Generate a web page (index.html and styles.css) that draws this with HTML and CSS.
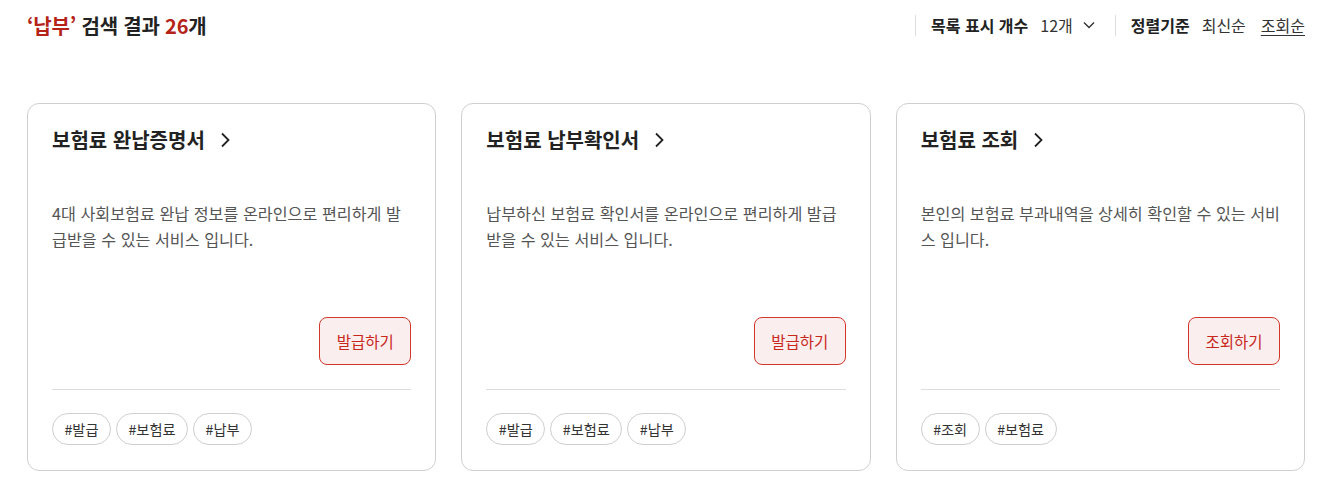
FILE: index.html
```html
<!DOCTYPE html>
<html lang="ko">
<head>
<meta charset="utf-8">
<link rel="stylesheet" href="styles.css">
</head>
<body>
<div class="page">
  <div class="top">
    <h2 class="result"><span class="hl">‘납부’</span> 검색 결과 <span class="hl">26</span>개</h2>
    <div class="opts">
      <div class="opt">
        <span class="lbl">목록 표시 개수</span>
        <span class="sel">12개
          <svg width="12" height="8" viewBox="0 0 12 8"><path d="M1 1.5l5 5 5-5" fill="none" stroke="#333" stroke-width="1.4"/></svg>
        </span>
      </div>
      <div class="opt">
        <span class="lbl">정렬기준</span>
        <span class="sort">최신순</span>
        <span class="sort active">조회순</span>
      </div>
    </div>
  </div>
  <div class="cards">
    <div class="card">
      <a class="title">보험료 완납증명서 <svg width="10" height="16" viewBox="0 0 10 16"><path d="M2 1.5l6.5 6.5L2 14.5" fill="none" stroke="#222" stroke-width="1.8"/></svg></a>
      <p class="desc">4대 사회보험료 완납 정보를 온라인으로 편리하게 발급받을 수 있는 서비스 입니다.</p>
      <div class="act"><button class="btn">발급하기</button></div>
      <div class="tags"><span class="tag">#발급</span><span class="tag">#보험료</span><span class="tag">#납부</span></div>
    </div>
    <div class="card">
      <a class="title">보험료 납부확인서 <svg width="10" height="16" viewBox="0 0 10 16"><path d="M2 1.5l6.5 6.5L2 14.5" fill="none" stroke="#222" stroke-width="1.8"/></svg></a>
      <p class="desc">납부하신 보험료 확인서를 온라인으로 편리하게 발급받을 수 있는 서비스 입니다.</p>
      <div class="act"><button class="btn">발급하기</button></div>
      <div class="tags"><span class="tag">#발급</span><span class="tag">#보험료</span><span class="tag">#납부</span></div>
    </div>
    <div class="card">
      <a class="title">보험료 조회 <svg width="10" height="16" viewBox="0 0 10 16"><path d="M2 1.5l6.5 6.5L2 14.5" fill="none" stroke="#222" stroke-width="1.8"/></svg></a>
      <p class="desc">본인의 보험료 부과내역을 상세히 확인할 수 있는 서비스 입니다.</p>
      <div class="act"><button class="btn">조회하기</button></div>
      <div class="tags"><span class="tag">#조회</span><span class="tag">#보험료</span></div>
    </div>
  </div>
</div>
</body>
</html>
```

FILE: styles.css
```css
* { box-sizing: border-box; }
body {
  margin: 0;
  background: #fff;
  font-family: "Noto Sans CJK KR", "Noto Sans", sans-serif;
  color: #222;
}
.page {
  padding: 0 20px 0 27px;
}
.top {
  display: flex;
  justify-content: space-between;
  align-items: center;
  height: 50px;
}
.result {
  margin: 0;
  font-size: 20px;
  font-weight: 700;
  color: #222;
  letter-spacing: -0.2px;
}
.hl { color: #b52318; }
.opts {
  display: flex;
  align-items: center;
}
.opt {
  display: flex;
  align-items: center;
  border-left: 1px solid #ddd;
  padding-left: 15px;
  height: 21px;
  font-size: 16px;
}
.opt + .opt { margin-left: 20px; }
.lbl { font-weight: 700; color: #222; margin-right: 12px; }
.sel {
  display: flex;
  align-items: center;
  gap: 10px;
  color: #333;
}
.sort { color: #333; }
.sort + .sort { margin-left: 15px; }
.sort.active { text-decoration: underline; text-underline-offset: 3px; }
.cards {
  display: grid;
  grid-template-columns: repeat(3, 1fr);
  gap: 25px;
  margin-top: 53px;
}
.card {
  border: 1px solid #cfcfcf;
  border-radius: 12px;
  padding: 22px 24px 25px;
  height: 368px;
  display: flex;
  flex-direction: column;
}
.title {
  display: flex;
  align-items: center;
  gap: 15px;
  font-size: 20px;
  font-weight: 700;
  color: #222;
  line-height: 28px;
}
.desc {
  margin: 46px -3px 0 0;
  font-size: 16.2px;
  line-height: 26px;
  color: #555;
  flex: 1;
}
.act {
  display: flex;
  justify-content: flex-end;
  padding-bottom: 24px;
  border-bottom: 1px solid #ddd;
}
.btn {
  width: 92px;
  height: 48px;
  border: 1px solid #d2372c;
  background: #fbeeee;
  border-radius: 8px;
  color: #c8281c;
  font-family: inherit;
  font-size: 15.5px;
}
.tags {
  display: flex;
  gap: 5px;
  margin-top: 23px;
}
.tag {
  display: inline-flex;
  align-items: center;
  height: 32px;
  padding: 0 11.5px;
  border: 1px solid #cfcfcf;
  border-radius: 16px;
  font-size: 14.2px;
  color: #333;
}
```
